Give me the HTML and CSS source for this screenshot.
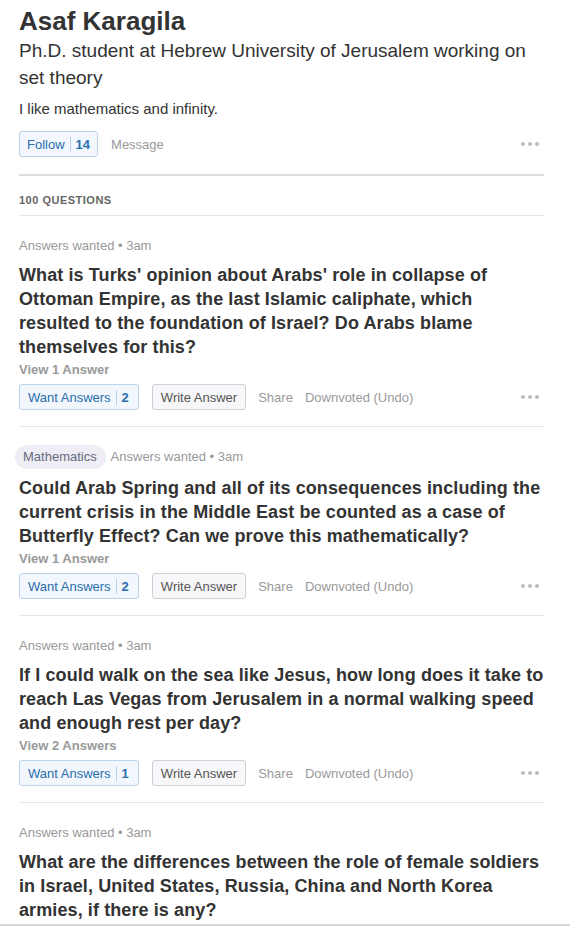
FILE: index.html
```html
<!DOCTYPE html>
<html lang="en">
<head>
<meta charset="utf-8">
<title>Asaf Karagila</title>
<link rel="stylesheet" href="styles.css">
</head>
<body>
<div class="page">
  <header class="profile">
    <h1 class="name">Asaf Karagila</h1>
    <div class="tagline">Ph.D. student at Hebrew University of Jerusalem working on set theory</div>
    <div class="bio">I like mathematics and infinity.</div>
    <div class="actions">
      <span class="btn btn-blue btn-follow">Follow<span class="sep"></span><b>14</b></span>
      <span class="link">Message</span>
      <span class="more"><i></i><i></i><i></i></span>
    </div>
  </header>

  <div class="list-head">100 Questions</div>

  <div class="question">
    <div class="meta">Answers wanted • 3am</div>
    <div class="title">What is Turks' opinion about Arabs' role in collapse of Ottoman Empire, as the last Islamic caliphate, which resulted to the foundation of Israel? Do Arabs blame themselves for this?</div>
    <div class="view">View 1 Answer</div>
    <div class="actions">
      <span class="btn btn-blue">Want Answers<span class="sep"></span><b>2</b></span>
      <span class="btn btn-grey">Write Answer</span>
      <span class="link">Share</span>
      <span class="link">Downvoted (Undo)</span>
      <span class="more"><i></i><i></i><i></i></span>
    </div>
  </div>

  <div class="question">
    <div class="meta"><span class="topic">Mathematics</span> Answers wanted • 3am</div>
    <div class="title">Could Arab Spring and all of its consequences including the current crisis in the Middle East be counted as a case of Butterfly Effect? Can we prove this mathematically?</div>
    <div class="view">View 1 Answer</div>
    <div class="actions">
      <span class="btn btn-blue">Want Answers<span class="sep"></span><b>2</b></span>
      <span class="btn btn-grey">Write Answer</span>
      <span class="link">Share</span>
      <span class="link">Downvoted (Undo)</span>
      <span class="more"><i></i><i></i><i></i></span>
    </div>
  </div>

  <div class="question">
    <div class="meta">Answers wanted • 3am</div>
    <div class="title">If I could walk on the sea like Jesus, how long does it take to reach Las Vegas from Jerusalem in a normal walking speed and enough rest per day?</div>
    <div class="view">View 2 Answers</div>
    <div class="actions">
      <span class="btn btn-blue">Want Answers<span class="sep"></span><b>1</b></span>
      <span class="btn btn-grey">Write Answer</span>
      <span class="link">Share</span>
      <span class="link">Downvoted (Undo)</span>
      <span class="more"><i></i><i></i><i></i></span>
    </div>
  </div>

  <div class="question">
    <div class="meta">Answers wanted • 3am</div>
    <div class="title">What are the differences between the role of female soldiers in Israel, United States, Russia, China and North Korea armies, if there is any?</div>
    <div class="view">View 1 Answer</div>
    <div class="actions">
      <span class="btn btn-blue">Want Answers<span class="sep"></span><b>1</b></span>
      <span class="btn btn-grey">Write Answer</span>
      <span class="link">Share</span>
      <span class="link">Downvoted (Undo)</span>
      <span class="more"><i></i><i></i><i></i></span>
    </div>
  </div>
</div>
<div class="bottom-edge"></div>
</body>
</html>
```

FILE: styles.css
```css
* { box-sizing: border-box; }

html, body {
  margin: 0;
  padding: 0;
  background: #fff;
}

body {
  font-family: "Liberation Sans", Arial, sans-serif;
  color: #333;
}

.page {
  width: 525px;
  margin-left: 19px;
}

.name {
  margin: 5px 0 0;
  font-size: 26px;
  line-height: 32px;
  font-weight: bold;
  color: #333;
}

.tagline {
  font-size: 19px;
  line-height: 27px;
  color: #333;
}

.bio {
  margin-top: 8px;
  font-size: 15px;
  line-height: 20px;
  color: #333;
}

.profile .actions {
  margin-top: 12px;
  margin-bottom: 17px;
}

.actions {
  display: flex;
  align-items: center;
  height: 26px;
}

.btn {
  display: inline-flex;
  align-items: center;
  height: 26px;
  padding: 0 9px 0 8px;
  font-size: 13px;
  border-radius: 3px;
  border: 1px solid;
  margin-right: 13px;
}

.btn-follow {
  padding: 0 7px;
}

.btn-blue {
  color: #2b6dad;
  background: #f1f7fc;
  border-color: #bcd2ea;
}

.btn-blue b {
  font-weight: bold;
}

.sep {
  display: inline-block;
  width: 1px;
  height: 15px;
  margin: 0 5px;
  background: #bcd2ea;
}

.btn-grey {
  color: #555;
  background: #f7f7f9;
  border-color: #cfcfd4;
  padding: 0 8px;
  margin-right: 12px;
}

.link {
  font-size: 13px;
  color: #999;
  margin-right: 12px;
  padding-top: 1px;
}

.more {
  margin-left: auto;
  margin-right: 5px;
  display: flex;
  gap: 3px;
}

.more i {
  display: block;
  width: 4px;
  height: 4px;
  border-radius: 50%;
  background: #bdbdbd;
}

.list-head {
  border-top: 2px solid #dedede;
  border-bottom: 1px solid #e6e6e6;
  padding: 17px 0 8px;
  font-size: 11px;
  line-height: 14px;
  font-weight: bold;
  text-transform: uppercase;
  color: #666;
  letter-spacing: 0.5px;
}

.question {
  border-bottom: 1px solid #e6e6e6;
  padding: 21px 0 16px;
}

.meta {
  font-size: 13px;
  line-height: 18px;
  color: #999;
}

.topic {
  display: inline-block;
  margin: -3px 2px -1px -4px;
  padding: 3px 9px 3px 8px;
  border-radius: 12px;
  background: #eeeef4;
  color: #666a80;
  line-height: 18px;
}

.title {
  margin-top: 8px;
  font-size: 18px;
  line-height: 24px;
  font-weight: bold;
  letter-spacing: 0.1px;
  color: #333;
}

.view {
  margin-top: 2px;
  font-size: 13px;
  line-height: 18px;
  font-weight: bold;
  color: #999;
}

.question .actions {
  margin-top: 5px;
}

.bottom-edge {
  position: fixed;
  left: 0;
  right: 0;
  top: 924px;
  height: 2px;
  background: #d8d8d8;
}
```
